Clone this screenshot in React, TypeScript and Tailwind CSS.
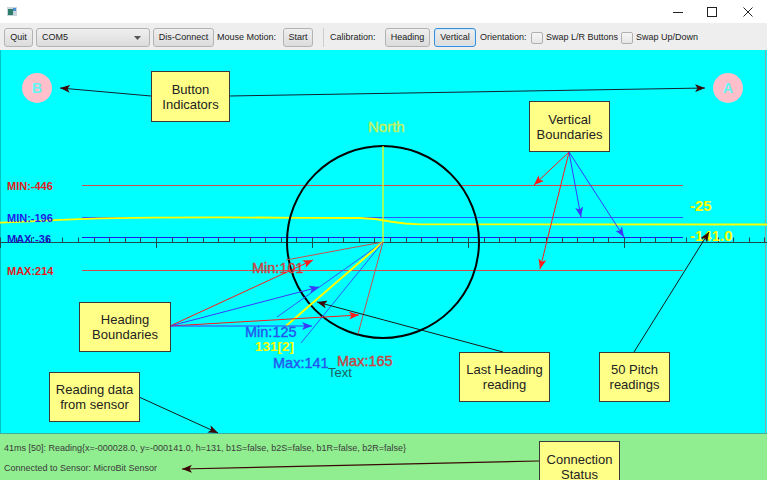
import React from "react";

const ticks = Array.from({ length: 50 }, (_, i) => i);

function Btn({ label, w, focused }: { label: string; w: string; focused?: boolean }) {
  return (
    <div
      className={
        "h-[19px] flex items-center justify-center rounded-[3px] bg-gradient-to-b from-[#efefef] to-[#dcdcdc] text-[#222] whitespace-nowrap " +
        w +
        (focused
          ? " border border-[#3a8fd6] shadow-[inset_0_0_0_1px_#cfe6f8]"
          : " border border-[#b3b3b3]")
      }
    >
      {label}
    </div>
  );
}

function Check() {
  return <div className="w-[12px] h-[12px] rounded-[2px] border border-[#b0b0b0] bg-gradient-to-b from-[#f6f6f6] to-[#e6e6e6]" />;
}

function Callout({ cls, lines }: { cls: string; lines: string[] }) {
  return (
    <div
      className={
        "absolute flex flex-col items-center justify-center bg-[#ffff88] border border-[#3a3a3a] text-[13px] leading-[15px] text-[#222] " +
        cls
      }
    >
      {lines.map((l) => (
        <div key={l} className="whitespace-nowrap">
          {l}
        </div>
      ))}
    </div>
  );
}

export default function App() {
  const cx = 383;
  const cy = 242;
  return (
    <div className="relative w-[767px] h-[480px] overflow-hidden bg-white flex flex-col font-['Liberation_Sans',Arial,sans-serif]">
      {/* Title bar */}
      <div className="h-[23px] flex items-center bg-white shrink-0">
        <svg width="10" height="9" className="ml-[7px]" viewBox="0 0 10 9">
          <rect x="0" y="0" width="10" height="9" fill="#c9d6de" />
          <rect x="1" y="2" width="5" height="6" fill="#2e7d6a" />
          <rect x="6" y="1" width="3" height="3" fill="#4a8fd0" />
        </svg>
        <div className="flex-1" />
        <svg width="12" height="12" viewBox="0 0 12 12" className="mr-[22px]">
          <line x1="1" y1="6.5" x2="11" y2="6.5" stroke="#222" strokeWidth="1" />
        </svg>
        <svg width="12" height="12" viewBox="0 0 12 12" className="mr-[24px]">
          <rect x="1.5" y="1.5" width="9" height="9" fill="none" stroke="#222" strokeWidth="1" />
        </svg>
        <svg width="12" height="12" viewBox="0 0 12 12" className="mr-[13px]">
          <line x1="1.5" y1="1.5" x2="10.5" y2="10.5" stroke="#222" strokeWidth="1" />
          <line x1="10.5" y1="1.5" x2="1.5" y2="10.5" stroke="#222" strokeWidth="1" />
        </svg>
      </div>

      {/* Toolbar */}
      <div className="h-[27px] shrink-0 bg-[#eeeeee] flex items-start pt-[5px] pl-[4px] text-[9px] text-[#222]">
        <Btn label="Quit" w="w-[29px]" />
        <div className="ml-[3px] w-[114px] h-[19px] rounded-[3px] border border-[#b3b3b3] bg-gradient-to-b from-[#efefef] to-[#dcdcdc] flex items-center pl-[5px] pr-[8px]">
          <span className="flex-1">COM5</span>
          <svg width="7" height="4" viewBox="0 0 7 4">
            <path d="M0,0 L7,0 L3.5,4 z" fill="#555" />
          </svg>
        </div>
        <div className="ml-[3px]">
          <Btn label="Dis-Connect" w="w-[61px]" />
        </div>
        <div className="ml-[3px] w-[63px] h-[19px] flex items-center whitespace-nowrap">Mouse Motion:</div>
        <div className="ml-[3px]">
          <Btn label="Start" w="w-[30px]" />
        </div>
        <div className="ml-[10px] w-px h-[19px] bg-[#cdcdcd]" />
        <div className="ml-[6px] w-[51px] h-[19px] flex items-center whitespace-nowrap">Calibration:</div>
        <div className="ml-[4px]">
          <Btn label="Heading" w="w-[45px]" />
        </div>
        <div className="ml-[4px]">
          <Btn label="Vertical" w="w-[42px]" focused />
        </div>
        <div className="ml-[4px] w-[47px] h-[19px] flex items-center whitespace-nowrap">Orientation:</div>
        <div className="ml-[4px] h-[19px] flex items-center">
          <Check />
        </div>
        <div className="ml-[3px] w-[72px] h-[19px] flex items-center whitespace-nowrap">Swap L/R Buttons</div>
        <div className="ml-[3px] h-[19px] flex items-center">
          <Check />
        </div>
        <div className="ml-[3px] h-[19px] flex items-center whitespace-nowrap">Swap Up/Down</div>
      </div>

      {/* Canvas */}
      <div className="relative flex-1 bg-[#00ffff]">
        <svg className="absolute inset-0" width="767" height="383" viewBox="0 50 767 383">
          <line x1="0.5" y1="50" x2="0.5" y2="433" stroke="#00c4c4" />
          <line x1="765.5" y1="50" x2="765.5" y2="433" stroke="#8aa5a5" />
          {/* button indicators */}
          <circle cx="37" cy="88" r="15" fill="#ffc0cb" />
          <text x="37" y="93" textAnchor="middle" fontSize="14" fontWeight="bold" fill="#5ff5f5">B</text>
          <circle cx="728" cy="88" r="15" fill="#ffc0cb" />
          <text x="728" y="93" textAnchor="middle" fontSize="14" fontWeight="bold" fill="#5ff5f5">A</text>

          {/* vertical boundaries */}
          <line x1="82" y1="185.5" x2="683" y2="185.5" stroke="#c85050" />
          <line x1="82" y1="217.5" x2="683" y2="217.5" stroke="#2a5cff" />
          <line x1="82" y1="237.5" x2="683" y2="237.5" stroke="#1c1cf0" />
          <line x1="82" y1="270.5" x2="683" y2="270.5" stroke="#c85050" />

          {/* axis and ticks */}
          <line x1="0" y1="242.5" x2="767" y2="242.5" stroke="#1d4a4a" />
          {ticks.map((i) => {
            const x = Math.round(i * 15.6) + 0.5;
            return (
              <line key={i} x1={x} y1="237.5" x2={x} y2={i % 10 === 0 ? 248 : 242} stroke="#1d4a4a" />
            );
          })}

          {/* pitch line */}
          <path
            d="M0,222.7 L30,221.3 L60,219.8 L100,218.3 L150,217.6 L220,217.3 L300,217.8 L360,218 L375,219 L390,221.5 L405,223.5 L420,224.3 L500,224.4 L767,224.5"
            fill="none"
            stroke="#ffff00"
            strokeWidth="1.8"
          />

          {/* compass */}
          <circle cx={cx} cy={cy} r="96" fill="none" stroke="#000" strokeWidth="2" />
          <line x1={cx} y1={cy} x2={cx} y2="146" stroke="#ffff00" strokeWidth="1.2" />
          <line x1={cx} y1={cy} x2="286" y2="260" stroke="#c85050" />
          <line x1={cx} y1={cy} x2="277" y2="317" stroke="#2a5cff" />
          <line x1={cx} y1={cy} x2="286" y2="326" stroke="#ffff00" strokeWidth="2" />
          <line x1={cx} y1={cy} x2="301" y2="343" stroke="#2a5cff" />
          <line x1={cx} y1={cy} x2="358" y2="334" stroke="#c85050" />

          <text x="368" y="132" fontSize="15" fill="#c4f25c" stroke="#c4f25c" strokeWidth="0.4">North</text>

          <text x="7" y="190" fontSize="11" fontWeight="bold" fill="#e02020">MIN:-446</text>
          <text x="7" y="222" fontSize="11" fontWeight="bold" fill="#2323e8">MIN:-196</text>
          <text x="7" y="243" fontSize="11" fontWeight="bold" fill="#1616c8">MAX:-36</text>
          <text x="7" y="275" fontSize="11" fontWeight="bold" fill="#e02020">MAX:214</text>

          <text x="690" y="211" fontSize="15" fontWeight="bold" fill="#ffff00">-25</text>
          <text x="690" y="241" fontSize="15" fontWeight="bold" fill="#ffff00">-141.0</text>

          <text x="252" y="273" fontSize="14.5" fill="#c84444" stroke="#c84444" strokeWidth="0.4">Min:101</text>
          <text x="245" y="337" fontSize="14.5" fill="#2456ee" stroke="#2456ee" strokeWidth="0.4">Min:125</text>
          <text x="255" y="351" fontSize="13.5" fontWeight="bold" fill="#ffff00">131[2]</text>
          <text x="273" y="368" fontSize="14.5" fill="#2456ee" stroke="#2456ee" strokeWidth="0.4">Max:141</text>
          <text x="337" y="366" fontSize="14.5" fill="#c84444" stroke="#c84444" strokeWidth="0.4">Max:165</text>
          <text x="328" y="377" fontSize="13" fill="#1f5f5f">Text</text>
        </svg>
      </div>

      {/* Status bar */}
      <div className="h-[47px] shrink-0 bg-[#90ee90] border-t border-[#3cb0a0] flex flex-col pl-[4px] text-[9px] text-[#3a3a3a]">
        <div className="h-[28px] flex items-center pt-[1px] whitespace-nowrap">
          41ms [50]: Reading{"{"}x=-000028.0, y=-000141.0, h=131, b1S=false, b2S=false, b1R=false, b2R=false{"}"}
        </div>
        <div className="flex items-center whitespace-nowrap">Connected to Sensor: MicroBit Sensor</div>
      </div>

      {/* Annotation overlay */}
      <svg className="absolute inset-0 pointer-events-none" width="767" height="480" viewBox="0 0 767 480">
        <defs>
          <marker id="ahk" markerUnits="userSpaceOnUse" markerWidth="10" markerHeight="8" refX="10" refY="4" orient="auto">
            <path d="M0,0 L10,4 L0,8 L2.5,4 z" fill="#3a0606" />
          </marker>
          <marker id="ahr" markerUnits="userSpaceOnUse" markerWidth="10" markerHeight="8" refX="10" refY="4" orient="auto">
            <path d="M0,0 L10,4 L0,8 L2.5,4 z" fill="#ff1a1a" />
          </marker>
          <marker id="ahb" markerUnits="userSpaceOnUse" markerWidth="10" markerHeight="8" refX="10" refY="4" orient="auto">
            <path d="M0,0 L10,4 L0,8 L2.5,4 z" fill="#3a3aff" />
          </marker>
        </defs>
        {/* button indicators */}
        <line x1="151" y1="96" x2="60" y2="88" stroke="#123" markerEnd="url(#ahk)" />
        <line x1="229" y1="96" x2="705" y2="88" stroke="#123" markerEnd="url(#ahk)" />
        {/* vertical boundaries */}
        <line x1="569" y1="152" x2="534" y2="185" stroke="#ff1a1a" markerEnd="url(#ahr)" />
        <line x1="569" y1="152" x2="540" y2="269" stroke="#ff1a1a" markerEnd="url(#ahr)" />
        <line x1="569" y1="152" x2="581" y2="217" stroke="#3a3aff" markerEnd="url(#ahb)" />
        <line x1="569" y1="152" x2="624" y2="237" stroke="#3a3aff" markerEnd="url(#ahb)" />
        {/* heading boundaries */}
        <line x1="170" y1="326" x2="313" y2="260" stroke="#ff1a1a" markerEnd="url(#ahr)" />
        <line x1="170" y1="326" x2="319" y2="287" stroke="#3a3aff" markerEnd="url(#ahb)" />
        <line x1="170" y1="326" x2="359" y2="315" stroke="#ff1a1a" markerEnd="url(#ahr)" />
        <line x1="170" y1="326" x2="312" y2="326" stroke="#3a3aff" markerEnd="url(#ahb)" />
        {/* others */}
        <line x1="503" y1="352" x2="317" y2="302" stroke="#1a1a1a" markerEnd="url(#ahk)" />
        <line x1="634" y1="352" x2="709" y2="232" stroke="#1a1a1a" markerEnd="url(#ahk)" />
        <line x1="139" y1="397" x2="218" y2="433" stroke="#1a1a1a" markerEnd="url(#ahk)" />
        <line x1="539" y1="461" x2="182" y2="469" stroke="#3a0606" strokeWidth="1.2" markerEnd="url(#ahk)" />
      </svg>

      <Callout cls="left-[151px] top-[71px] w-[79px] h-[51px]" lines={["Button", "Indicators"]} />
      <Callout cls="left-[529px] top-[101px] w-[81px] h-[51px]" lines={["Vertical", "Boundaries"]} />
      <Callout cls="left-[79px] top-[302px] w-[92px] h-[50px]" lines={["Heading", "Boundaries"]} />
      <Callout cls="left-[459px] top-[352px] w-[91px] h-[50px]" lines={["Last Heading", "reading"]} />
      <Callout cls="left-[599px] top-[352px] w-[71px] h-[50px]" lines={["50 Pitch", "readings"]} />
      <Callout cls="left-[49px] top-[372px] w-[91px] h-[50px]" lines={["Reading data", "from sensor"]} />
      <Callout cls="left-[539px] top-[441px] w-[81px] h-[51px]" lines={["Connection", "Status"]} />
    </div>
  );
}
